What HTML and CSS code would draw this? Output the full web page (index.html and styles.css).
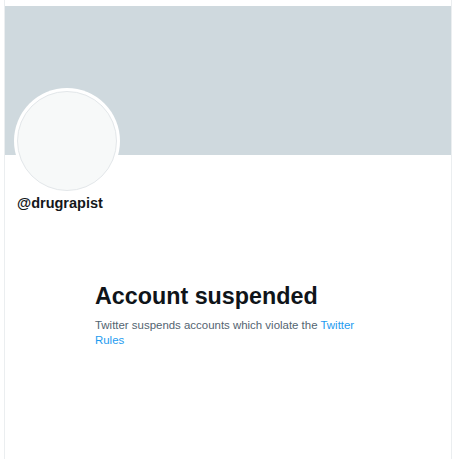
FILE: index.html
```html
<!DOCTYPE html>
<html>
<head>
<meta charset="utf-8">
<link rel="stylesheet" href="styles.css">
</head>
<body>
<div class="page">
  <div class="banner"></div>
  <div class="profile">
    <div class="avatar"><div class="avatar-inner"></div></div>
    <div class="handle">@drugrapist</div>
  </div>
  <div class="notice">
    <h1 class="title">Account suspended</h1>
    <p class="desc">Twitter suspends accounts which violate the <a class="link" href="#">Twitter Rules</a></p>
  </div>
</div>
</body>
</html>
```
FILE: styles.css
```css
html, body {
  margin: 0;
  padding: 0;
  background: #ffffff;
}
.page {
  margin-left: 4px;
  width: 448px;
  height: 459px;
  padding-top: 6px;
  box-sizing: border-box;
  border-left: 1px solid #ebeef0;
  border-right: 1px solid #ebeef0;
  font-family: "Liberation Sans", Arial, sans-serif;
}
.banner {
  height: 149px;
  background: #cfd9de;
}
.profile {
  padding-left: 9px;
  margin-top: -67px;
}
.avatar {
  width: 106px;
  height: 106px;
  border-radius: 50%;
  background: #ffffff;
  padding: 3px;
  box-sizing: border-box;
}
.avatar-inner {
  width: 100%;
  height: 100%;
  border-radius: 50%;
  box-sizing: border-box;
  border: 1px solid #e3e7ea;
  background: #f7f9f9;
}
.handle {
  margin-top: 1px;
  margin-left: 3px;
  font-size: 14.5px;
  font-weight: bold;
  color: #14171a;
  line-height: 17px;
}
.notice {
  padding-left: 90px;
  padding-top: 71px;
}
.title {
  margin: 0;
  font-size: 23.3px;
  font-weight: 900;
  color: #0f1419;
  line-height: 26px;
}
.desc {
  margin: 9px 0 0;
  width: 280px;
  font-size: 11.45px;
  line-height: 15px;
  color: #536471;
}
.link {
  color: #1d9bf0;
  text-decoration: none;
}
```
